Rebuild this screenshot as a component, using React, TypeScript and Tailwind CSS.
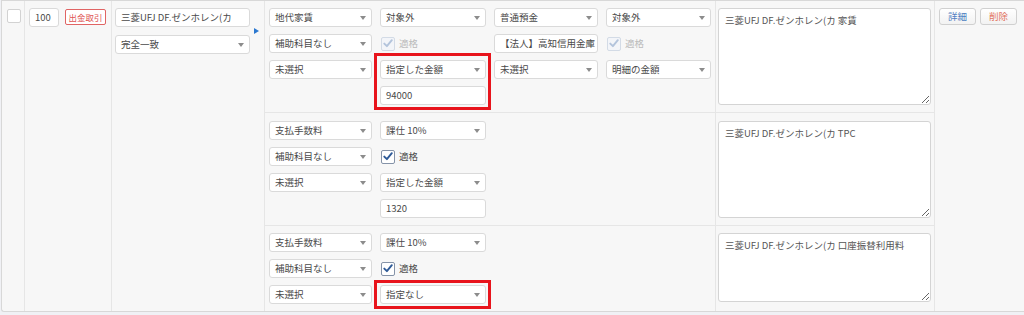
import React from "react";

function Arrow() {
  return (
    <svg width="6" height="4" viewBox="0 0 6 4" className="absolute right-[5px] top-[7px]">
      <path d="M0 0h6L3 4z" fill="#8c8c8c" />
    </svg>
  );
}

function Sel({ label }: { label: string }) {
  return (
    <div className="relative h-[19px] bg-white border border-[#dadada] rounded-[3px] flex items-center pl-[5px] text-[#4a4a4a] whitespace-nowrap">
      <span className="leading-[13px]">{label}</span>
      <Arrow />
    </div>
  );
}

function Inp({ value }: { value: string }) {
  return (
    <div className="h-[19px] bg-white border border-[#dadada] rounded-[3px] flex items-center pl-[5px] text-[#4a4a4a] whitespace-nowrap">
      <span className="leading-[13px]">{value}</span>
    </div>
  );
}

function Chk({ disabled }: { disabled?: boolean }) {
  return (
    <div className="h-[19px] flex items-center gap-[4px] pl-[1px]">
      <div
        className={
          disabled
            ? "w-[14px] h-[14px] rounded-[2px] border border-[#d3dbe6] bg-[#f3f5f9] flex items-center justify-center"
            : "w-[14px] h-[14px] rounded-[2px] border border-[#8593a8] bg-white flex items-center justify-center"
        }
      >
        <svg width="10" height="9" viewBox="0 0 10 9">
          <path
            d="M1.3 4.6 L3.9 7.2 L8.8 1.2"
            fill="none"
            stroke={disabled ? "#b3c4dc" : "#2f5b98"}
            strokeWidth="1.9"
            strokeLinecap="round"
            strokeLinejoin="round"
          />
        </svg>
      </div>
      <span className={disabled ? "text-[#bbb] leading-[13px]" : "text-[#4a4a4a] leading-[13px]"}>適格</span>
    </div>
  );
}

function Memo({ text }: { text: string }) {
  return (
    <textarea
      readOnly
      defaultValue={text}
      className="w-[213px] h-full bg-white border border-[#d4d4d4] rounded-[3px] px-[6px] py-[4px] text-[#555] text-[9.5px] leading-[14px] outline-none font-['Noto_Sans_CJK_JP',sans-serif]"
    />
  );
}

function RedBox({ className }: { className: string }) {
  return <div className={"absolute border-[3px] border-[#e8141c] pointer-events-none " + className} />;
}

export default function App() {
  const grid =
    "grid grid-cols-[103px_106px_104px_105px] auto-rows-[19px] gap-x-[8px] gap-y-[7px]";
  return (
    <div className="w-[1024px] h-[315px] bg-[#f0f1f5] font-['Noto_Sans_CJK_JP',sans-serif] text-[9.5px] leading-[13px] overflow-hidden">
      <div className="ml-[1px] flex bg-[#f7f7f7] border-t border-l border-b border-[#d8d8d8] rounded-bl-[3px]">
        {/* col A */}
        <div className="w-[23px] shrink-0 border-r border-[#e6e6e6] pt-[8px] pl-[5px]">
          <div className="w-[14px] h-[14px] bg-white border border-[#d2d2d2] rounded-[2px]" />
        </div>
        {/* col B */}
        <div className="w-[87px] shrink-0 border-r border-[#e6e6e6] pt-[7px] pl-[4px] flex items-start gap-[6px]">
          <div className="w-[30px] h-[19px] bg-white border border-[#dadada] rounded-[3px] flex items-center pl-[5px] text-[#4a4a4a]">
            100
          </div>
          <div className="mt-[1px] w-[41px] h-[16px] bg-white border border-[#e06464] rounded-[2px] flex items-center justify-center text-[#e05252] text-[8.5px] leading-[12px]">
            出金取引
          </div>
        </div>
        {/* col C */}
        <div className="w-[153px] shrink-0 border-r border-[#e6e6e6] pt-[7px] pl-[3px] flex items-start">
          <div className="w-[135px] flex flex-col gap-[8px]">
            <Inp value="三菱UFJ DF.ゼンホレン(カ" />
            <Sel label="完全一致" />
          </div>
          <svg width="5" height="6" viewBox="0 0 5 6" className="ml-[4px] mt-[20px]">
            <path d="M0 0L5 3L0 6z" fill="#2b78d0" />
          </svg>
        </div>
        {/* col D */}
        <div className="w-[670px] shrink-0 border-r border-[#e6e6e6] flex flex-col">
          {/* sub row 1 */}
          <div className="flex border-b border-[#e6e6e6]">
            <div className="w-[451px] border-r border-[#e6e6e6] pt-[7px] pb-[7px] pl-[4px]">
              <div className={grid}>
                <Sel label="地代家賃" />
                <Sel label="対象外" />
                <Sel label="普通預金" />
                <Sel label="対象外" />
                <Sel label="補助科目なし" />
                <Chk disabled />
                <Sel label="【法人】高知信用金庫" />
                <Chk disabled />
                <Sel label="未選択" />
                <div className="relative row-span-2 flex flex-col gap-[7px]">
                  <Sel label="指定した金額" />
                  <Inp value="94000" />
                  <RedBox className="-top-[7px] -left-[6px] -right-[5px] -bottom-[5px]" />
                </div>
                <Sel label="未選択" />
                <Sel label="明細の金額" />
              </div>
            </div>
            <div className="flex-1 pt-[7px] pb-[7px] pl-[2px]">
              <Memo text="三菱UFJ DF.ゼンホレン(カ 家賃" />
            </div>
          </div>
          {/* sub row 2 */}
          <div className="flex border-b border-[#e6e6e6]">
            <div className="w-[451px] border-r border-[#e6e6e6] pt-[8px] pb-[7px] pl-[4px]">
              <div className={grid}>
                <Sel label="支払手数料" />
                <Sel label="課仕 10%" />
                <div />
                <div />
                <Sel label="補助科目なし" />
                <Chk />
                <div />
                <div />
                <Sel label="未選択" />
                <Sel label="指定した金額" />
                <div />
                <div />
                <div />
                <Inp value="1320" />
              </div>
            </div>
            <div className="flex-1 pt-[8px] pb-[7px] pl-[2px]">
              <Memo text="三菱UFJ DF.ゼンホレン(カ TPC" />
            </div>
          </div>
          {/* sub row 3 */}
          <div className="flex">
            <div className="w-[451px] border-r border-[#e6e6e6] pt-[7px] pb-[7px] pl-[4px]">
              <div className={grid}>
                <Sel label="支払手数料" />
                <Sel label="課仕 10%" />
                <div />
                <div />
                <Sel label="補助科目なし" />
                <Chk />
                <div />
                <div />
                <Sel label="未選択" />
                <div className="relative">
                  <Sel label="指定なし" />
                  <RedBox className="-top-[5px] -left-[6px] -right-[5px] -bottom-[5px]" />
                </div>
              </div>
            </div>
            <div className="flex-1 pt-[7px] pb-[9px] pl-[2px]">
              <Memo text="三菱UFJ DF.ゼンホレン(カ 口座振替利用料" />
            </div>
          </div>
        </div>
        {/* col E */}
        <div className="flex-1 pt-[7px] pl-[4px] flex items-start gap-[4px]">
          <div className="w-[37px] h-[17px] rounded-[3px] border border-[#d0d0d0] bg-gradient-to-b from-white to-[#f2f2f2] flex items-center justify-center text-[#4f7fc2]">
            詳細
          </div>
          <div className="w-[37px] h-[17px] rounded-[3px] border border-[#d0d0d0] bg-gradient-to-b from-white to-[#f2f2f2] flex items-center justify-center text-[#e2735f]">
            削除
          </div>
        </div>
      </div>
    </div>
  );
}
